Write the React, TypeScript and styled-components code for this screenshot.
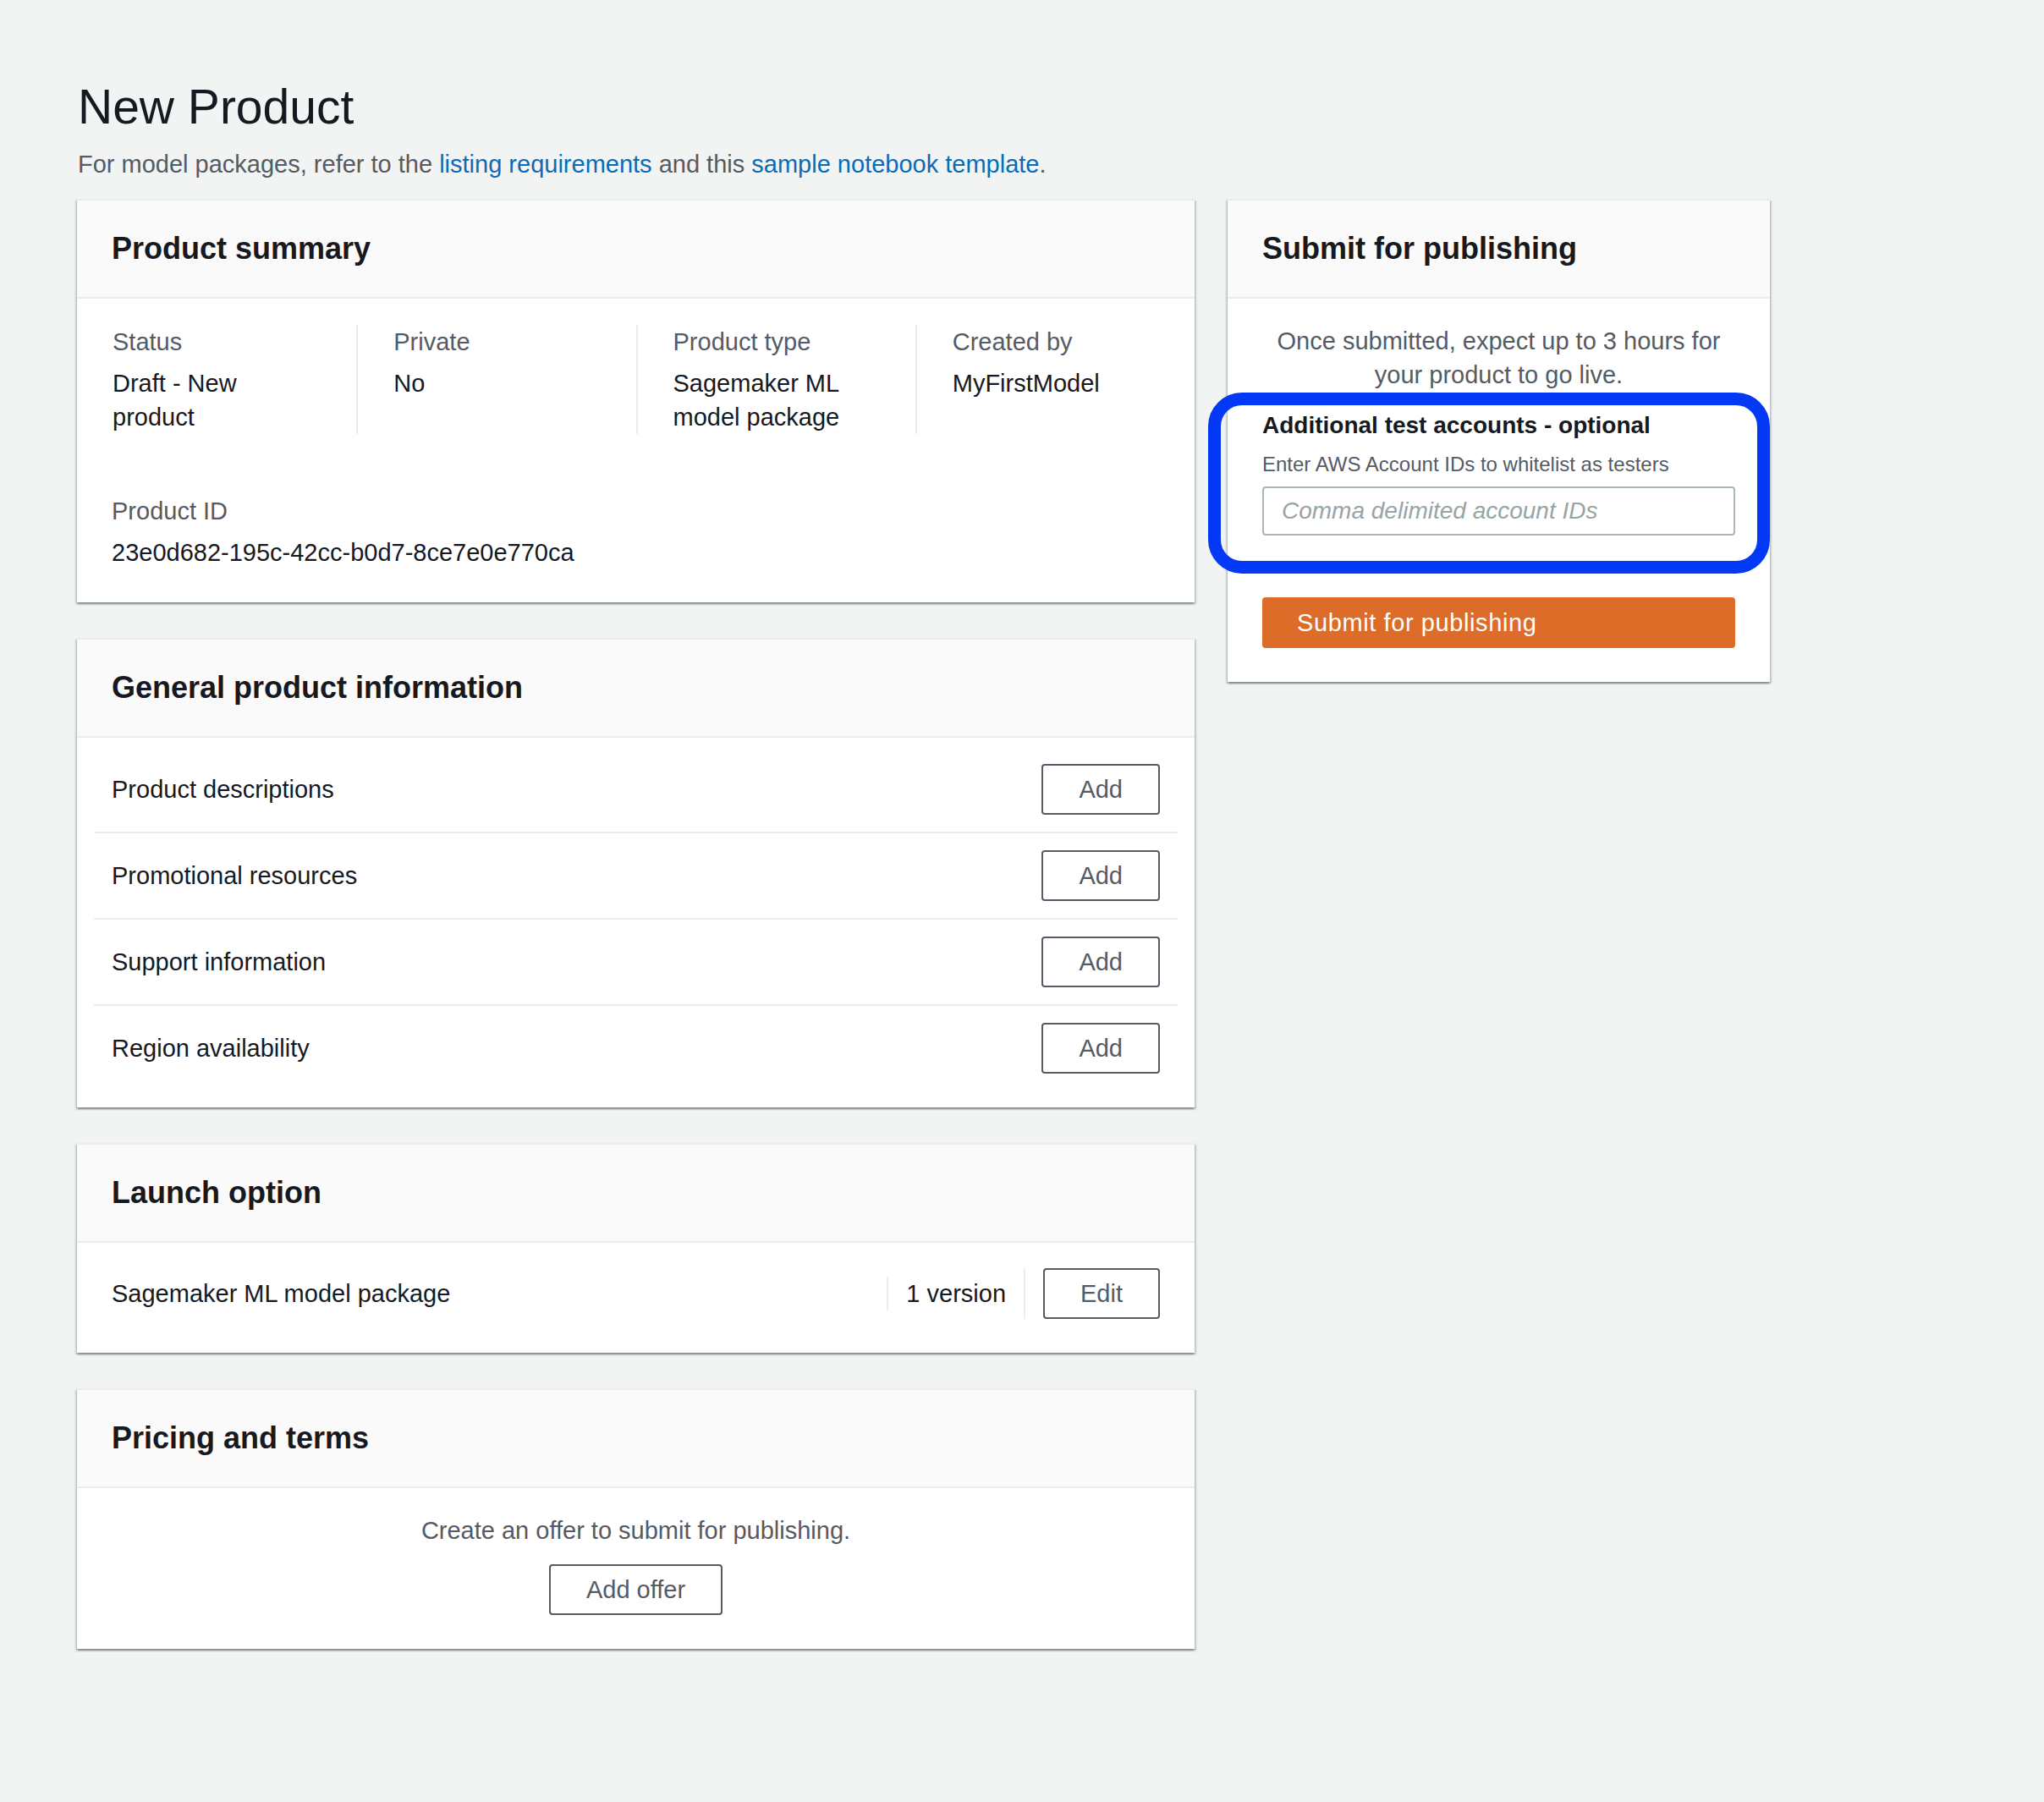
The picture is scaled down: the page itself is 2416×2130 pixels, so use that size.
import React from "react";
import styled, { createGlobalStyle } from "styled-components";

const GlobalStyle = createGlobalStyle`
  html, body {
    margin: 0;
    padding: 0;
    background: #f2f3f3;
  }
  body {
    font-family: "Liberation Sans", Arial, sans-serif;
    color: #16191f;
    min-height: 2130px;
  }
  * { box-sizing: border-box; }
`;

const Page = styled.div`
  padding: 92px 0 80px 91px;
`;

const Title = styled.h1`
  margin: 0 0 14px 1px;
  font-size: 57px;
  line-height: 68px;
  font-weight: 400;
  color: #16191f;
`;

const Intro = styled.p`
  margin: 0 0 21px 1px;
  font-size: 29px;
  line-height: 40px;
  color: #545b64;
`;

const TextLink = styled.a`
  color: #0a6bb8;
  text-decoration: none;
`;

const Layout = styled.div`
  display: grid;
  grid-template-columns: 1321px 641px;
  column-gap: 39px;
  align-items: start;
`;

const Column = styled.div`
  display: flex;
  flex-direction: column;
  gap: 42px;
`;

const Panel = styled.section`
  background: #ffffff;
  border-top: 2px solid #eaeded;
  box-shadow: 0 2px 2px 0 rgba(0, 28, 36, 0.3),
    2px 2px 2px 0 rgba(0, 28, 36, 0.15),
    -2px 2px 2px 0 rgba(0, 28, 36, 0.15);
`;

const PanelHeader = styled.header`
  background: #fafafa;
  padding: 35px 41px;
  border-bottom: 2px solid #eaeded;
`;

const PanelTitle = styled.h2`
  margin: 0;
  font-size: 36px;
  line-height: 44px;
  font-weight: 700;
  color: #16191f;
`;

const PanelBody = styled.div<{ $center?: boolean }>`
  padding: 30px 41px 40px;
  text-align: ${(p) => (p.$center ? "center" : "left")};
`;

const SummaryBody = styled(PanelBody)`
  padding-top: 31px;
  padding-bottom: 39px;
`;

const ListBody = styled.div`
  padding: 11px 20px 20px;
`;

const AttrGrid = styled.div`
  display: grid;
  grid-template-columns: repeat(4, 1fr);
  margin: 0 -41px;
`;

const AttrCell = styled.div<{ $first?: boolean }>`
  padding: 0 50px 0 42px;
  border-left: ${(p) => (p.$first ? "none" : "2px solid #eaeded")};
`;

const Label = styled.div`
  font-size: 29px;
  line-height: 40px;
  color: #545b64;
  margin-bottom: 9px;
`;

const Value = styled.div`
  font-size: 29px;
  line-height: 40px;
  color: #16191f;
`;

const IdBlock = styled.div`
  margin-top: 71px;
`;

const ListRow = styled.div<{ $last?: boolean }>`
  display: flex;
  align-items: center;
  justify-content: space-between;
  padding: 20px 21px;
  border-bottom: ${(p) => (p.$last ? "none" : "2px solid #eaeded")};
`;

const RowText = styled.span`
  font-size: 29px;
  line-height: 40px;
  color: #16191f;
`;

const Button = styled.button`
  font-family: "Liberation Sans", Arial, sans-serif;
  font-size: 29px;
  line-height: 40px;
  padding: 8px 42px;
  background: #ffffff;
  color: #545b64;
  border: 2px solid #545b64;
  border-radius: 4px;
  cursor: pointer;
`;

const LaunchRow = styled.div`
  display: flex;
  align-items: center;
`;

const LaunchName = styled(RowText)`
  flex: 1;
`;

const VersionCell = styled.span`
  font-size: 29px;
  line-height: 40px;
  color: #16191f;
  padding: 0 21px;
  border-left: 2px solid #eaeded;
`;

const ActionCell = styled.div`
  display: flex;
  padding-left: 21px;
  border-left: 2px solid #eaeded;
`;

const MutedText = styled.p`
  margin: 0;
  font-size: 29px;
  line-height: 40px;
  color: #545b64;
`;

const OfferButton = styled(Button)`
  margin-top: 20px;
`;

const Field = styled.div`
  position: relative;
  margin-top: 20px;
  text-align: left;
`;

const FieldLabel = styled.div`
  font-size: 28px;
  line-height: 40px;
  font-weight: 700;
  color: #16191f;
`;

const FieldHint = styled.div`
  margin-top: 10px;
  font-size: 24px;
  line-height: 32px;
  color: #545b64;
`;

const TextInput = styled.input`
  display: block;
  width: 100%;
  height: 58px;
  margin-top: 10px;
  padding: 0 21px;
  border: 2px solid #aab7b8;
  border-radius: 4px;
  background: #ffffff;
  font-family: "Liberation Sans", Arial, sans-serif;
  font-size: 28px;
  color: #16191f;
  outline: none;
  &::placeholder {
    color: #98a4a6;
    font-style: italic;
  }
`;

const Highlight = styled.div`
  position: absolute;
  top: -19px;
  left: -64px;
  right: -41px;
  bottom: -45px;
  border: 15px solid #0339f5;
  border-radius: 40px;
  pointer-events: none;
`;

const PrimaryButton = styled.button`
  display: block;
  width: 100%;
  height: 60px;
  margin-top: 73px;
  padding: 0 41px;
  border: none;
  border-radius: 4px;
  background: #dd6c28;
  color: #ffffff;
  text-align: left;
  font-family: "Liberation Sans", Arial, sans-serif;
  font-size: 29px;
  letter-spacing: 0.6px;
  line-height: 40px;
  cursor: pointer;
`;

const attributes = [
  { label: "Status", value: "Draft - New product" },
  { label: "Private", value: "No" },
  { label: "Product type", value: "Sagemaker ML model package" },
  { label: "Created by", value: "MyFirstModel" },
];

const generalRows = [
  "Product descriptions",
  "Promotional resources",
  "Support information",
  "Region availability",
];

export default function App() {
  return (
    <>
      <GlobalStyle />
      <Page>
        <Title>New Product</Title>
        <Intro>
          For model packages, refer to the{" "}
          <TextLink href="#">listing requirements</TextLink> and this{" "}
          <TextLink href="#">sample notebook template</TextLink>.
        </Intro>
        <Layout>
          <Column>
            <Panel>
              <PanelHeader>
                <PanelTitle>Product summary</PanelTitle>
              </PanelHeader>
              <SummaryBody>
                <AttrGrid>
                  {attributes.map((a, i) => (
                    <AttrCell key={a.label} $first={i === 0}>
                      <Label>{a.label}</Label>
                      <Value>{a.value}</Value>
                    </AttrCell>
                  ))}
                </AttrGrid>
                <IdBlock>
                  <Label>Product ID</Label>
                  <Value>23e0d682-195c-42cc-b0d7-8ce7e0e770ca</Value>
                </IdBlock>
              </SummaryBody>
            </Panel>

            <Panel>
              <PanelHeader>
                <PanelTitle>General product information</PanelTitle>
              </PanelHeader>
              <ListBody>
                {generalRows.map((r, i) => (
                  <ListRow key={r} $last={i === generalRows.length - 1}>
                    <RowText>{r}</RowText>
                    <Button>Add</Button>
                  </ListRow>
                ))}
              </ListBody>
            </Panel>

            <Panel>
              <PanelHeader>
                <PanelTitle>Launch option</PanelTitle>
              </PanelHeader>
              <PanelBody>
                <LaunchRow>
                  <LaunchName>Sagemaker ML model package</LaunchName>
                  <VersionCell>1 version</VersionCell>
                  <ActionCell>
                    <Button>Edit</Button>
                  </ActionCell>
                </LaunchRow>
              </PanelBody>
            </Panel>

            <Panel>
              <PanelHeader>
                <PanelTitle>Pricing and terms</PanelTitle>
              </PanelHeader>
              <PanelBody $center>
                <MutedText>Create an offer to submit for publishing.</MutedText>
                <OfferButton>Add offer</OfferButton>
              </PanelBody>
            </Panel>
          </Column>

          <Column>
            <Panel>
              <PanelHeader>
                <PanelTitle>Submit for publishing</PanelTitle>
              </PanelHeader>
              <PanelBody $center>
                <MutedText>
                  Once submitted, expect up to 3 hours for your product to go
                  live.
                </MutedText>
                <Field>
                  <FieldLabel>Additional test accounts - optional</FieldLabel>
                  <FieldHint>Enter AWS Account IDs to whitelist as testers</FieldHint>
                  <TextInput placeholder="Comma delimited account IDs" />
                  <Highlight />
                </Field>
                <PrimaryButton>Submit for publishing</PrimaryButton>
              </PanelBody>
            </Panel>
          </Column>
        </Layout>
      </Page>
    </>
  );
}
